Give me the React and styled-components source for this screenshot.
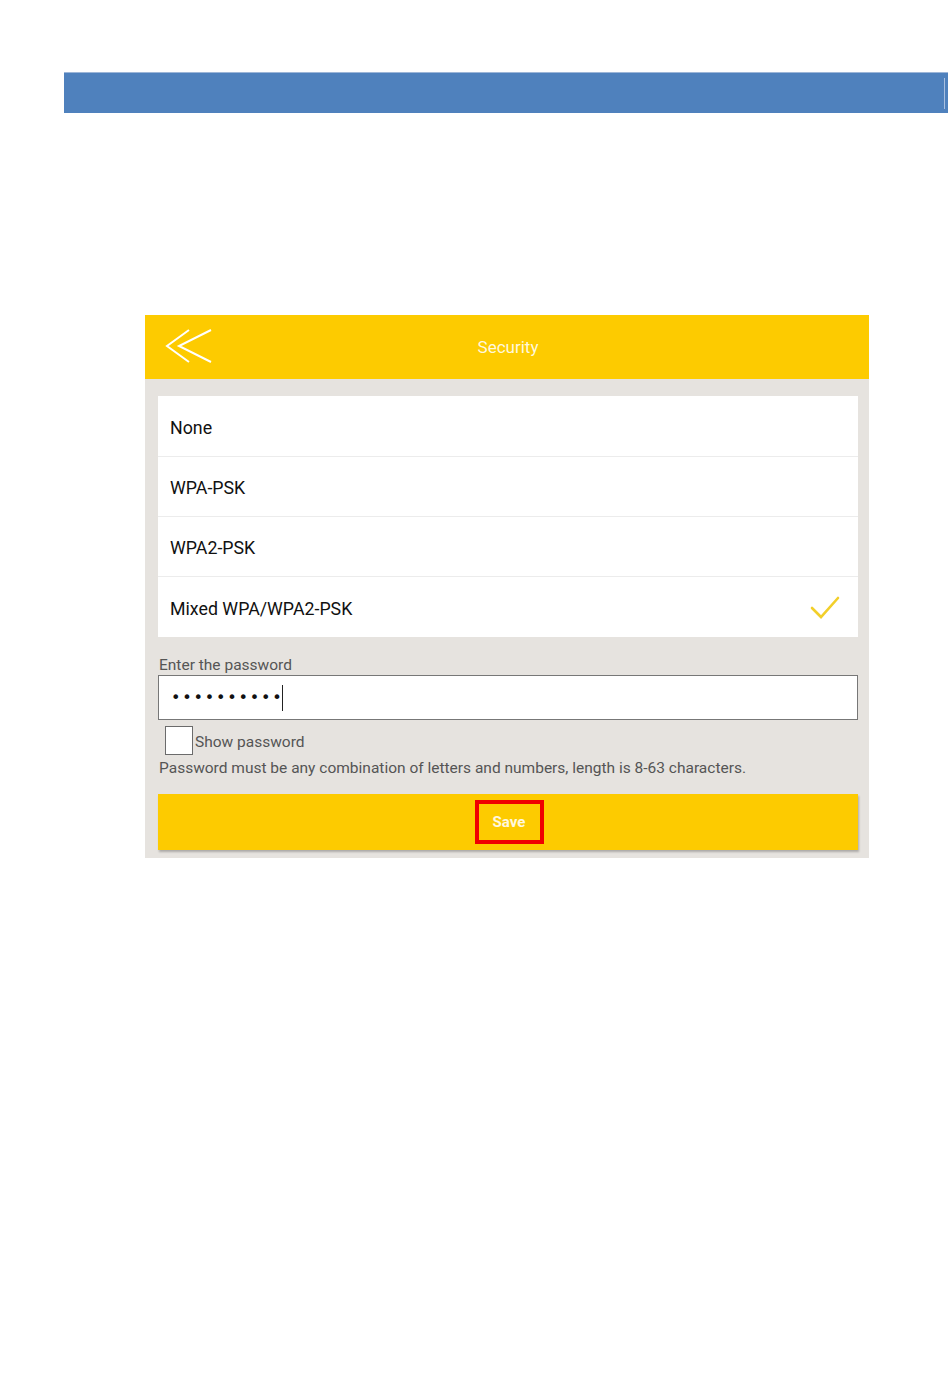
import React from "react";
import styled, { createGlobalStyle } from "styled-components";

const GlobalStyle = createGlobalStyle`
    html, body {
        margin: 0;
        padding: 0;
        background: #ffffff;
        font-family: Roboto, "Liberation Sans", sans-serif;
    }
`;

const options = ["None", "WPA-PSK", "WPA2-PSK", "Mixed WPA/WPA2-PSK"];

function BackIcon() {
    return (
        <svg width="48" height="34" viewBox="0 0 48 34" fill="none">
            <path d="M24 1 L2 17 L24 33" stroke="#fff" strokeWidth="2" />
            <path d="M46 1 L14 17 L46 33" stroke="#fff" strokeWidth="2" />
        </svg>
    );
}

function CheckIcon() {
    return (
        <svg width="30" height="26" viewBox="0 0 30 26" fill="none">
            <path d="M2 13 L11 22 L28 3" stroke="#f2cf2a" strokeWidth="2.6" strokeLinecap="round" />
        </svg>
    );
}

export default function App() {
    return (
        <Page>
            <GlobalStyle />
            <BlueBar>
                <BarEdge />
            </BlueBar>
            <Screen>
                <Header>
                    <BackButton>
                        <BackIcon />
                    </BackButton>
                    <Title>Security</Title>
                </Header>
                <Body>
                    <List>
                        {options.map((opt, i) => (
                            <Row key={opt} last={i === options.length - 1}>
                                <span>{opt}</span>
                                {i === options.length - 1 && <CheckIcon />}
                            </Row>
                        ))}
                    </List>
                    <Label>Enter the password</Label>
                    <Input>
                        <Dots>{"•".repeat(10)}</Dots>
                        <Caret />
                    </Input>
                    <CheckLine>
                        <Box />
                        <SmallText>Show password</SmallText>
                    </CheckLine>
                    <Hint>Password must be any combination of letters and numbers, length is 8-63 characters.</Hint>
                    <SaveBar>
                        <SaveBox>Save</SaveBox>
                    </SaveBar>
                </Body>
            </Screen>
        </Page>
    );
}

const Page = styled.div`
    width: 950px;
    height: 1387px;
    padding-top: 72px;
    box-sizing: border-box;
    background: #ffffff;
    overflow: hidden;
`;

const BlueBar = styled.div`
    margin-left: 64px;
    width: 884px;
    height: 41px;
    background: #4f81bd;
    border-top: 1px solid #9db6d8;
    box-sizing: border-box;
    position: relative;
`;

const BarEdge = styled.div`
    position: absolute;
    right: 3px;
    top: 5px;
    bottom: 4px;
    width: 1px;
    background: #a9c0e0;
`;

const Screen = styled.div`
    margin: 202px 0 0 145px;
    width: 724px;
    background: #e6e3df;
`;

const Header = styled.div`
    height: 64px;
    background: #fdcb00;
    display: flex;
    align-items: center;
    position: relative;
`;

const BackButton = styled.div`
    position: absolute;
    left: 20px;
    top: 14px;
    display: flex;
`;

const Title = styled.div`
    flex: 1;
    text-align: center;
    color: #fff8dc;
    font-size: 17px;
    padding-left: 2px;
`;

const Body = styled.div`
    padding: 17px 11px 8px 13px;
`;

const List = styled.div`
    background: #fff;
    padding-top: 1px;
`;

const Row = styled.div`
    height: 60px;
    box-sizing: border-box;
    display: flex;
    align-items: center;
    justify-content: space-between;
    padding: 2px 18px 0 12px;
    font-size: 17.8px;
    color: #111;
    border-bottom: ${(p) => (p.last ? "none" : "1px solid #ececec")};
`;

const Label = styled.div`
    margin-top: 18px;
    font-size: 15.5px;
    color: #555;
    line-height: 20px;
    padding-left: 1px;
`;

const Input = styled.div`
    height: 45px;
    box-sizing: border-box;
    border: 1px solid #777;
    background: #fff;
    display: flex;
    align-items: center;
    padding-left: 12px;
`;

const Dots = styled.span`
    font-size: 16px;
    letter-spacing: 1.8px;
    color: #111;
    font-family: "DejaVu Sans", sans-serif;
`;

const Caret = styled.span`
    width: 1px;
    height: 26px;
    background: #222;
    margin-left: -1px;
`;

const CheckLine = styled.div`
    display: flex;
    align-items: flex-end;
    margin-top: 6px;
    padding-left: 7px;
`;

const Box = styled.div`
    width: 28px;
    height: 29px;
    box-sizing: border-box;
    border: 1px solid #6b6b6b;
    background: #fff;
    margin-right: 2px;
`;

const SmallText = styled.span`
    font-size: 15.5px;
    color: #555;
    line-height: 20px;
    margin-bottom: 3px;
`;

const Hint = styled(Label)`
    margin-top: 3px;
`;

const SaveBar = styled.div`
    margin-top: 16px;
    height: 56px;
    background: #fdcb00;
    box-shadow: 1px 2px 2px rgba(0, 0, 0, 0.25);
    display: flex;
    justify-content: center;
    align-items: center;
`;

const SaveBox = styled.div`
    width: 69px;
    height: 44px;
    box-sizing: border-box;
    border: 4px solid #f00000;
    display: flex;
    align-items: center;
    justify-content: center;
    color: #fff8e0;
    font-weight: bold;
    font-size: 15px;
    margin-left: 2px;
`;
